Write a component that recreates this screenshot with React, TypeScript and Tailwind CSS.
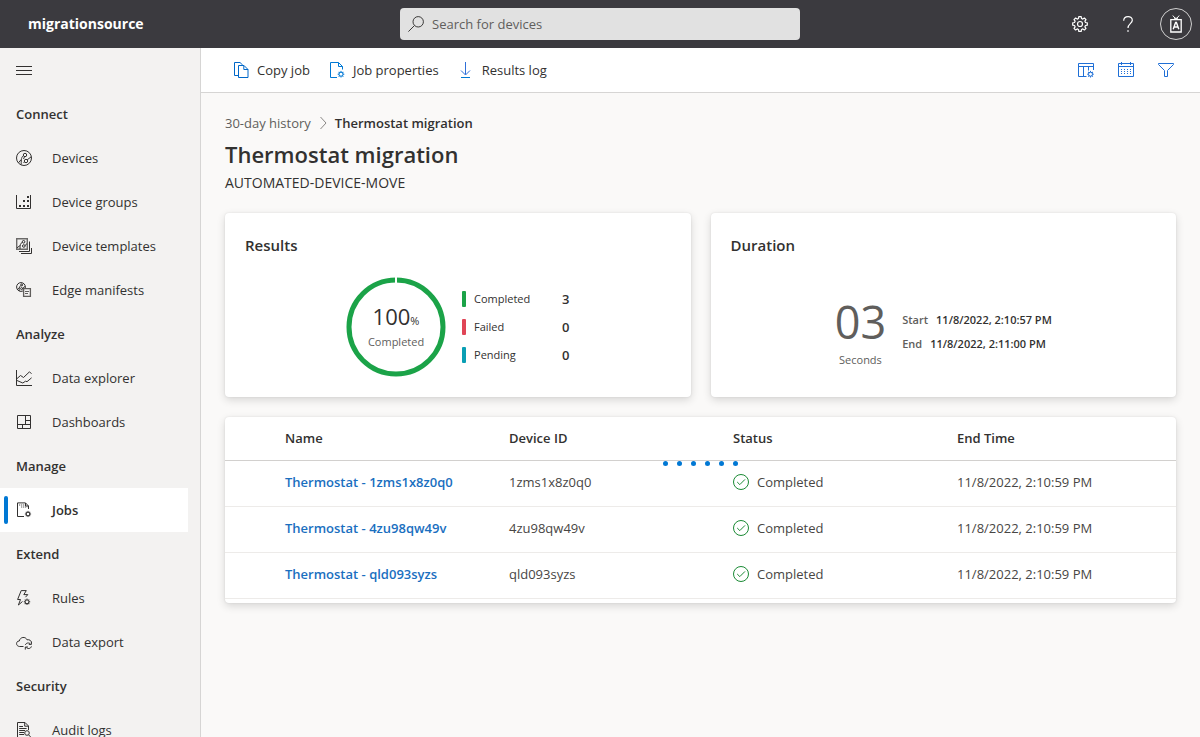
import type { ReactNode } from "react";

type IconProps = { children: ReactNode; className?: string };

function Icon({ children, className = "" }: IconProps) {
  return (
    <svg
      viewBox="0 0 16 16"
      width="16"
      height="16"
      fill="none"
      stroke="currentColor"
      strokeWidth="1"
      aria-hidden="true"
      className={`shrink-0 ${className}`}
    >
      {children}
    </svg>
  );
}

function SmallGear({ cx, cy, r = 2 }: { cx: number; cy: number; r?: number }) {
  const angles = [0, 45, 90, 135, 180, 225, 270, 315];
  return (
    <g>
      <circle cx={cx} cy={cy} r={r} />
      {angles.map((a) => (
        <line
          key={a}
          x1={cx + r}
          y1={cy}
          x2={cx + r + 1.3}
          y2={cy}
          transform={`rotate(${a} ${cx} ${cy})`}
        />
      ))}
    </g>
  );
}

const icons = {
  devices: (
    <Icon>
      <circle cx="8" cy="8" r="7.5" />
      <circle cx="9" cy="5" r="1.7" />
      <circle cx="10" cy="11" r="1.7" />
      <path d="M7.4 5.6 C5.5 7 5.2 9 5.2 14.6 M8.5 6.8 L7.5 9 M11.2 9.8 L15.2 6.8 M2.5 12.8 L5.2 9.5 M8.6 12 L7.5 12.5" />
    </Icon>
  ),
  groups: (
    <Icon>
      <path d="M.5 1 V14.5 H14.5 V1" />
      <path
        fill="currentColor"
        stroke="none"
        d="M3 11h2v2H3zM7 11h2v2H7zM11 11h2v2h-2zM7 6h2v2H7zM11 6h2v2h-2zM11 2h2v2h-2z"
      />
    </Icon>
  ),
  templates: (
    <Icon>
      <path d="M.7 .7 H11.3 V11.3 H.7 Z" strokeWidth="1.4" stroke="#6b6a69" />
      <circle cx="7.6" cy="3.8" r="1.3" />
      <circle cx="7.8" cy="8" r="1.3" />
      <path d="M6.3 4.3 C4.3 5.4 4 7 4 11 M9 7.5 L11 5.6 M1 9.8 L4 7.6" />
      <path d="M3 13.5 H13.5 V3.5 M5 15.5 H15.5 V10" />
    </Icon>
  ),
  manifests: (
    <Icon>
      <circle cx="5" cy="5" r="4.4" />
      <path d="M3.2 9 C3.2 5 3.8 4.3 5.4 3 M6.2 6.8 L9 4.4 M1.4 7.5 L3.4 5.4" />
      <circle cx="5.7" cy="2.9" r="1" />
      <circle cx="5.6" cy="6.6" r="1" />
      <path fill="#f3f2f1" stroke="#605e5c" d="M7.6 6.6 H14.4 V14.4 H7.6 Z" strokeWidth="1.3" />
      <path d="M9 9.5 H13 M9 11.5 H12" stroke="#605e5c" />
    </Icon>
  ),
  explorer: (
    <Icon>
      <path d="M.5 0 V15.5 H16" />
      <path d="M.8 8.8 L4.5 5.5 L7.5 7.5 L13.5 1.8 L15.5 3.8 M1 10.5 L6.8 13 L9.5 11.2 L11 11.7 L15.6 7.8" />
    </Icon>
  ),
  dashboards: (
    <Icon>
      <path d="M1.5 1.5 H14.5 V14.5 H1.5 Z M9.5 1.5 V10.5 M1.5 10.5 H14.5 M9.5 6.5 H14.5 M6.5 10.5 V14.5" />
    </Icon>
  ),
  jobs: (
    <Icon>
      <path d="M8 14.5 H1.5 V.9 H9.5 L12.5 4 V7" />
      <path d="M9.5 1 V4 H12.5" />
      <path d="M3.2 3 H8.4 M5.2 5 H11.4" strokeDasharray="1 1" />
      <SmallGear cx={12} cy={12} r={1.8} />
    </Icon>
  ),
  rules: (
    <Icon>
      <path d="M2.4 15 L4.5 9.5 H1.6 L5.2 .6 H10.3 L7.8 4.6 H11.8 L9.5 7.2 M2.4 15 L6.5 11.5" />
      <SmallGear cx={11} cy={11.8} r={1.9} />
    </Icon>
  ),
  dataExport: (
    <Icon>
      <path d="M7.5 12.5 H3.6 C-.6 12.2 -.2 6.8 3.3 7 C4 2.8 9.6 2.2 11 5.8 C13.6 5.3 15.2 6.6 15.4 8.4" />
      <path d="M9.4 11 C10 8.6 13.2 8.3 14.6 10.2 M15.4 7.8 V10.4 H12.8 M15.4 12.4 C14.8 14.9 11.4 15.2 10 13.3 M9.3 15.6 V13 H12" />
    </Icon>
  ),
  audit: (
    <Icon>
      <path d="M7.5 15.5 H1.5 V.5 H9 L12.5 4 V8" />
      <path d="M8.7 .5 V4.2 H12.5" />
      <path d="M3.2 4.5 H7 M3.2 6.5 H10.6 M3.2 8.5 H9 M3.2 10.5 H8 M3.2 12.5 H8" />
      <circle cx="11" cy="11" r="2.3" />
      <path d="M12.6 12.8 L15 15.4" />
    </Icon>
  ),
};

type NavEntry = { label: string; icon?: ReactNode; active?: boolean };

const nav: NavEntry[] = [
  { label: "Connect" },
  { label: "Devices", icon: icons.devices },
  { label: "Device groups", icon: icons.groups },
  { label: "Device templates", icon: icons.templates },
  { label: "Edge manifests", icon: icons.manifests },
  { label: "Analyze" },
  { label: "Data explorer", icon: icons.explorer },
  { label: "Dashboards", icon: icons.dashboards },
  { label: "Manage" },
  { label: "Jobs", icon: icons.jobs, active: true },
  { label: "Extend" },
  { label: "Rules", icon: icons.rules },
  { label: "Data export", icon: icons.dataExport },
  { label: "Security" },
  { label: "Audit logs", icon: icons.audit },
];

const legend = [
  { label: "Completed", value: 3, color: "bg-[#1ba348]" },
  { label: "Failed", value: 0, color: "bg-[#e04556]" },
  { label: "Pending", value: 0, color: "bg-[#0a9fb4]" },
];

const devices = ["1zms1x8z0q0", "4zu98qw49v", "qld093syzs"];

function TopBar() {
  return (
    <header className="grid h-12 shrink-0 grid-cols-3 items-center bg-[#3b3a3f] text-white">
      <div className="pl-7 text-sm font-bold">migrationsource</div>
      <label className="flex h-8 items-center gap-2 rounded-sm bg-[#e1e1e1] px-2 text-[#3b3a39]">
        <Icon>
          <circle cx="10.2" cy="5.8" r="5.2" />
          <path d="M6.5 9.5 L.4 15.6" />
        </Icon>
        <input
          type="search"
          aria-label="Search for devices"
          placeholder="Search for devices"
          className="min-w-0 flex-1 bg-transparent outline-none placeholder:text-[#605e5c]"
        />
      </label>
      <div className="flex items-center justify-end pr-2">
        <button type="button" aria-label="Settings" className="flex size-12 items-center justify-center">
          <Icon>
            <path
              strokeLinejoin="round"
              strokeWidth="1.2"
              d="M6.8 .7 H9.2 L9.5 2.5 L10.8 3.1 L12.4 2 L14 3.6 L12.9 5.2 L13.5 6.5 L15.3 6.8 V9.2 L13.5 9.5 L12.9 10.8 L14 12.4 L12.4 14 L10.8 12.9 L9.5 13.5 L9.2 15.3 H6.8 L6.5 13.5 L5.2 12.9 L3.6 14 L2 12.4 L3.1 10.8 L2.5 9.5 L.7 9.2 V6.8 L2.5 6.5 L3.1 5.2 L2 3.6 L3.6 2 L5.2 3.1 L6.5 2.5 Z"
            />
            <circle cx="8" cy="8" r="2.5" strokeWidth="1.2" />
          </Icon>
        </button>
        <button type="button" aria-label="Help" className="flex size-12 items-center justify-center">
          <Icon>
            <path
              strokeWidth="1.2"
              d="M3.7 4.8 C3.7 -.8 12.6 -.6 12.3 4.4 C12.1 7.6 8 8 8 12"
            />
            <path d="M7.3 14.3 H8.7 V15.7 H7.3 Z" fill="currentColor" stroke="none" />
          </Icon>
        </button>
        <button
          type="button"
          aria-label="Account"
          className="ml-2 flex size-8 items-center justify-center rounded-full border border-[#d0d0d0]"
        >
          <svg viewBox="0 0 16 18" width="16" height="18" fill="none" stroke="currentColor" aria-hidden="true">
            <path d="M2.8 4.6 H13.2 V17 H2.8 Z" strokeWidth="1.3" />
            <path d="M4.8 .5 L8 4.4 L11.2 .5 M6 3.2 H10" />
            <path d="M5.2 14.3 L7.6 7.5 H8.4 L10.8 14.3 M6 12 H10" strokeWidth="1.4" />
          </svg>
        </button>
      </div>
    </header>
  );
}

function Sidebar() {
  return (
    <nav aria-label="Main" className="w-[201px] shrink-0 overflow-hidden border-r border-[#d6d5d4] bg-[#f3f2f1]">
      <button type="button" aria-label="Collapse navigation" className="flex h-11 w-12 items-center justify-center">
        <Icon>
          <path d="M0 4.5 H16 M0 8.5 H16 M0 12.5 H16" />
        </Icon>
      </button>
      <ul className="pr-3">
        {nav.map((entry) => (
          <li key={entry.label} className="h-11">
            {entry.icon ? (
              <a
                href="#"
                className={
                  entry.active
                    ? "flex h-full items-center bg-white pl-1 font-semibold"
                    : "flex h-full items-center pl-4"
                }
              >
                {entry.active && <span className="mr-2 h-7 w-1 rounded-sm bg-[#0078d4]" />}
                {entry.icon}
                <span className="pl-5">{entry.label}</span>
              </a>
            ) : (
              <h2 className="flex h-full items-center pl-4 font-semibold">{entry.label}</h2>
            )}
          </li>
        ))}
      </ul>
    </nav>
  );
}

function CommandBar() {
  return (
    <div className="flex h-[45px] shrink-0 items-center justify-between border-b border-[#d6d5d4] bg-white pr-[26px] pl-8">
      <div className="flex items-center gap-[19px]">
        <button type="button" className="flex items-center gap-2">
          <Icon className="text-[#0067c8]">
            <path d="M5.5 13.5 H1.5 V.5 H7 L9.8 3.2 M5.5 3.5 H11 L15 7.5 V15.5 H5.5 Z M10.8 3.5 V7.5 H15" />
          </Icon>
          Copy job
        </button>
        <button type="button" className="flex items-center gap-2">
          <Icon className="text-[#0078d4]">
            <path d="M8 15.5 H1.5 V.5 H9.5 L13.5 4.5 V7.5 M9.5 .5 V4.5 H13.5" />
            <SmallGear cx={12} cy={12.2} r={2} />
          </Icon>
          Job properties
        </button>
        <button type="button" className="flex items-center gap-2">
          <Icon className="text-[#2f6fd8]">
            <path d="M7.5 0 V12.5 M3 8.5 L7.5 13 L12 8.5" />
            <path d="M3 15.5 H12" stroke="#0078d4" />
          </Icon>
          Results log
        </button>
      </div>
      <div className="flex items-center gap-6 text-[#1f6fd6]">
        <button type="button" aria-label="Column options">
          <Icon>
            <path d="M8.5 14.5 H.5 V1.5 H15.5 V8 M.5 4.5 H15.5 M5.5 4.5 V14.5 M10.5 4.5 V8.5" />
            <SmallGear cx={12.5} cy={12.2} r={2} />
          </Icon>
        </button>
        <button type="button" aria-label="Date range">
          <Icon>
            <path d="M.5 1.5 H15.5 V14.5 H.5 Z M.5 4.5 H15.5 M3.5 0 V3 M12.5 0 V3" />
            <path d="M3 7.5 H13 M3 9.5 H13 M3 11.5 H13" strokeDasharray="1 2" />
          </Icon>
        </button>
        <button type="button" aria-label="Filter">
          <Icon>
            <path d="M.5 1.5 H15.5 V2.5 L9.5 8.5 V14.5 H6.5 V8.5 L.5 2.5 Z" />
          </Icon>
        </button>
      </div>
    </div>
  );
}

const card = "rounded bg-white shadow-[0_3px_8px_rgba(0,0,0,0.14),0_0_2px_rgba(0,0,0,0.1)]";

function ResultsCard() {
  return (
    <section className={`${card} h-[184px] px-5 pt-5`}>
      <h2 className="text-[15px] leading-6 font-semibold">Results</h2>
      <div className="mt-5 flex items-center justify-center gap-4">
        <div className="relative size-[100px]">
          <svg viewBox="0 0 100 100" className="size-full" aria-hidden="true">
            <circle cx="50" cy="50" r="47" fill="none" stroke="#1ba348" strokeWidth="5" />
            <path d="M50 0 V7" stroke="#fff" strokeWidth="2" />
          </svg>
          <div className="absolute inset-0 flex flex-col items-center justify-center">
            <div className="text-[22px] leading-6">
              100<span className="text-[11px]">%</span>
            </div>
            <div className="text-[11px] leading-[18px] text-[#605e5c]">Completed</div>
          </div>
        </div>
        <dl className="flex flex-col gap-3">
          {legend.map((item) => (
            <div key={item.label} className="flex h-4 items-center">
              <dt className="flex w-[100px] items-center gap-2 text-[11px]">
                <span className={`h-4 w-1 rounded-[1px] ${item.color}`} />
                {item.label}
              </dt>
              <dd className="font-semibold">{item.value}</dd>
            </div>
          ))}
        </dl>
      </div>
    </section>
  );
}

function DurationCard() {
  return (
    <section className={`${card} h-[184px] px-5 pt-5`}>
      <h2 className="text-[15px] leading-6 font-semibold">Duration</h2>
      <div className="mt-9 flex justify-center gap-4">
        <div className="text-center text-[#605e5c]">
          <div className="text-[45px] leading-[58px]">03</div>
          <div className="text-[11px] leading-[18px]">Seconds</div>
        </div>
        <dl className="mt-[15px] text-[11px] leading-6 font-semibold">
          <div className="flex gap-2">
            <dt className="text-[#605e5c]">Start</dt>
            <dd>11/8/2022, 2:10:57 PM</dd>
          </div>
          <div className="flex gap-2">
            <dt className="text-[#605e5c]">End</dt>
            <dd>11/8/2022, 2:11:00 PM</dd>
          </div>
        </dl>
      </div>
    </section>
  );
}

function DeviceTable() {
  return (
    <section className={`${card} relative mt-5 pb-1`}>
      <table className="w-full table-fixed border-collapse text-left">
        <colgroup>
          <col className="w-[60px]" />
          <col className="w-56" />
          <col className="w-56" />
          <col className="w-56" />
          <col />
        </colgroup>
        <thead>
          <tr className="h-[43px] border-b border-[#d2d0ce]">
            <td />
            <th className="font-semibold">Name</th>
            <th className="font-semibold">Device ID</th>
            <th className="font-semibold">Status</th>
            <th className="font-semibold">End Time</th>
          </tr>
        </thead>
        <tbody className="text-[#484644]">
          {devices.map((id) => (
            <tr key={id} className="h-[46px] border-b border-[#edebe9]">
              <td />
              <td className="pb-0.5">
                <a href="#" className="font-semibold text-[#1a6fbf]">
                  Thermostat - {id}
                </a>
              </td>
              <td className="pb-0.5">{id}</td>
              <td className="pb-0.5">
                <span className="flex items-center gap-2">
                  <Icon className="text-[#1a8a34]">
                    <circle cx="8" cy="8" r="7.5" />
                    <path d="M4.2 8 L6.8 10.6 L12 5.4" />
                  </Icon>
                  Completed
                </span>
              </td>
              <td className="pb-0.5">11/8/2022, 2:10:59 PM</td>
            </tr>
          ))}
        </tbody>
      </table>
      <div role="progressbar" aria-label="Loading" className="absolute inset-x-0 top-11 flex justify-center gap-[9px]">
        {[0, 1, 2, 3, 4, 5].map((dot) => (
          <span key={dot} className="size-[5px] rounded-full bg-[#0078d4]" />
        ))}
      </div>
    </section>
  );
}

export default function App() {
  return (
    <div className="flex h-screen flex-col overflow-hidden bg-[#faf9f8] font-['Open_Sans',sans-serif] text-[13px] leading-5 text-[#323130]">
      <TopBar />
      <div className="flex min-h-0 flex-1">
        <Sidebar />
        <div className="flex min-w-0 flex-1 flex-col">
          <CommandBar />
          <main className="flex-1 px-6 pt-5">
            <nav aria-label="Breadcrumb" className="flex items-center gap-1.5">
              <a href="#" className="text-[#605e5c]">
                30-day history
              </a>
              <svg viewBox="0 0 12 14" width="12" height="14" fill="none" stroke="#8a8886" aria-hidden="true">
                <path d="M3.5 1 L9 7 L3.5 13" />
              </svg>
              <span className="font-semibold">Thermostat migration</span>
            </nav>
            <h1 className="mt-1 mb-0.5 text-[22px] leading-[34px] font-semibold">Thermostat migration</h1>
            <p className="text-sm leading-5">AUTOMATED-DEVICE-MOVE</p>
            <div className="mt-5 grid grid-cols-2 gap-5">
              <ResultsCard />
              <DurationCard />
            </div>
            <DeviceTable />
          </main>
        </div>
      </div>
    </div>
  );
}
